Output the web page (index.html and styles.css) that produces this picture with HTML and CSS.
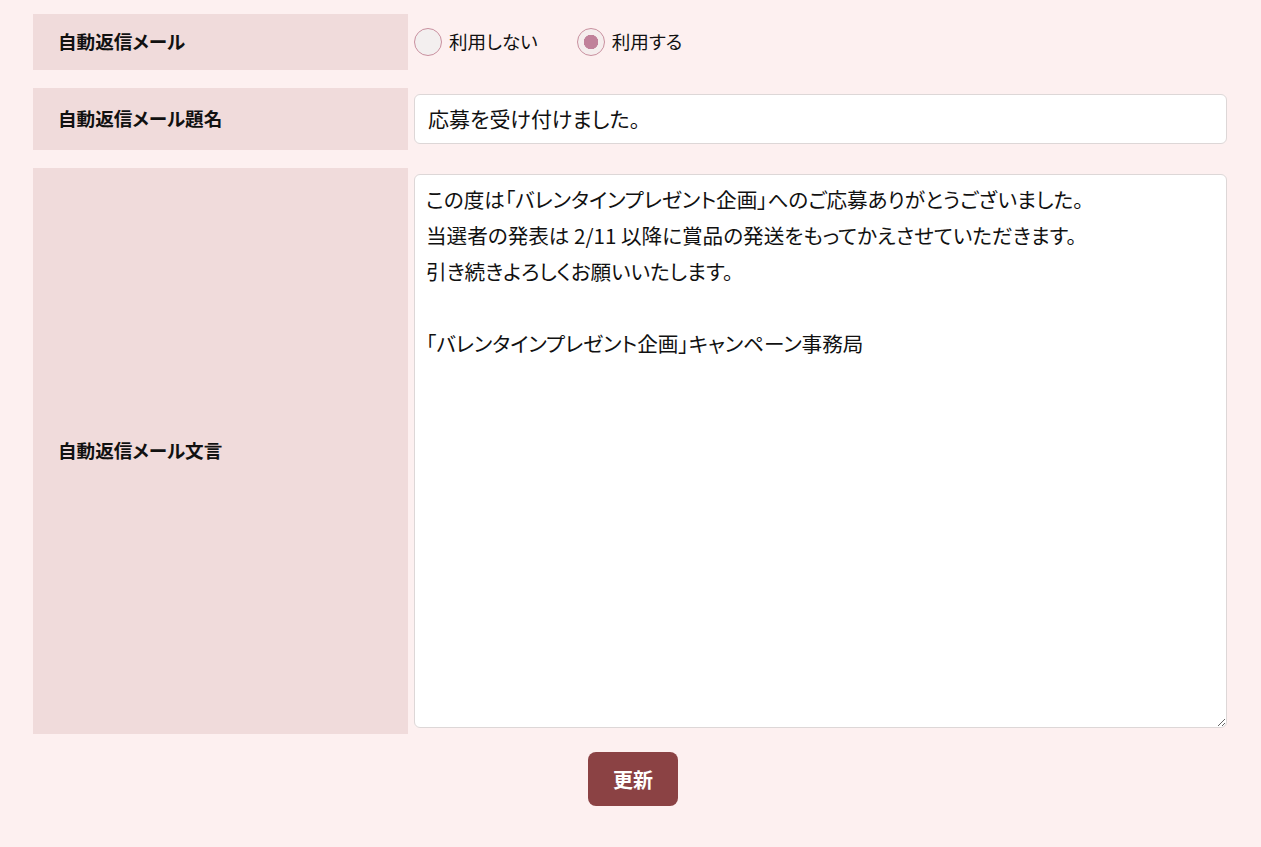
FILE: index.html
```html
<!DOCTYPE html>
<html lang="ja">
<head>
<meta charset="utf-8">
<title>自動返信メール設定</title>
<link rel="stylesheet" href="styles.css">
</head>
<body>
<form class="form">
  <div class="grid">
    <div class="label">自動返信メール</div>
    <div class="field radios">
      <label class="radio"><input type="radio" name="auto" value="0"><span>利用しない</span></label>
      <label class="radio"><input type="radio" name="auto" value="1" checked><span>利用する</span></label>
    </div>

    <div class="label">自動返信メール題名</div>
    <div class="field">
      <input class="text" type="text" value="応募を受け付けました。">
    </div>

    <div class="label">自動返信メール文言</div>
    <div class="field">
      <textarea class="area">この度は「バレンタインプレゼント企画」へのご応募ありがとうございました。
当選者の発表は 2/11 以降に賞品の発送をもってかえさせていただきます。
引き続きよろしくお願いいたします。

「バレンタインプレゼント企画」キャンペーン事務局</textarea>
    </div>
  </div>
  <div class="actions">
    <button type="button" class="submit">更新</button>
  </div>
</form>
</body>
</html>
```
FILE: styles.css
```css
html, body {
  margin: 0;
  padding: 0;
  background: #fdf0f0;
}
body {
  font-family: "Noto Sans CJK JP", "Noto Sans", sans-serif;
  color: #111;
}
.form {
  width: 1200px;
  margin: 14px 0 0 33px;
}
.grid {
  display: grid;
  grid-template-columns: 375px 1fr;
  row-gap: 18px;
}
.label {
  background: #f0dbdb;
  display: flex;
  align-items: center;
  padding-left: 25px;
  padding-bottom: 3px;
  font-size: 18.6px;
  font-weight: bold;
  font-feature-settings: "palt";
}
.field {
  padding: 6px;
}
.radios {
  display: flex;
  align-items: center;
  gap: 39px;
  height: 44px;
}
.radio {
  display: flex;
  align-items: center;
  gap: 7px;
  font-size: 18.6px;
  font-feature-settings: "palt";
}
.radio span {
  position: relative;
  top: -2px;
}
.radio input {
  appearance: none;
  -webkit-appearance: none;
  margin: 0;
  width: 28px;
  height: 28px;
  border-radius: 50%;
  border: 1px solid #c9909f;
  background: #f3efef;
}
.radio input:checked {
  background: radial-gradient(circle, #c0819a 0 7px, #f5eded 7.5px 100%);
}
.text {
  box-sizing: border-box;
  width: 100%;
  height: 50px;
  border: 1px solid #ddd7d7;
  border-radius: 6px;
  background: #fff;
  padding: 0 13px 3px;
  font-family: inherit;
  font-size: 21px;
  font-feature-settings: "palt";
  color: #111;
}
.area {
  display: block;
  box-sizing: border-box;
  width: 100%;
  height: 554px;
  border: 1px solid #ddd7d7;
  border-radius: 6px;
  background: #fff;
  padding: 6px 11px;
  font-family: inherit;
  font-size: 20.6px;
  line-height: 36px;
  font-feature-settings: "palt";
  color: #111;
}
.actions {
  display: flex;
  justify-content: center;
  padding-top: 18px;
}
.submit {
  width: 90px;
  height: 54px;
  border: none;
  border-radius: 8px;
  background: #8b4244;
  color: #fff;
  font-family: inherit;
  font-size: 20px;
  font-weight: bold;
}
```
